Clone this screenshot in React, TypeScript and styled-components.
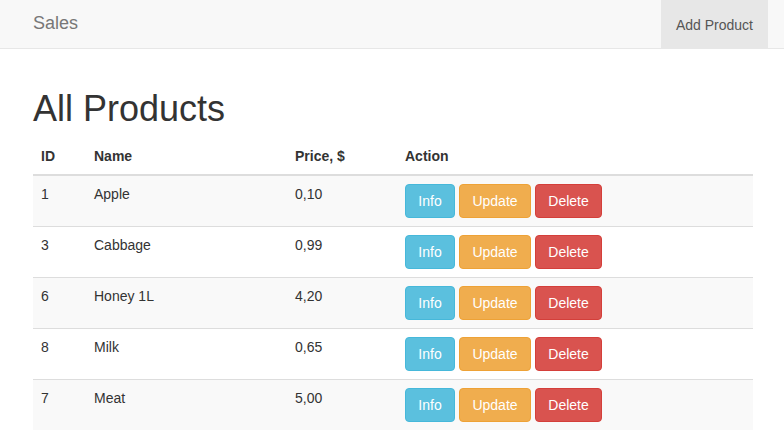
import React from "react";
import styled, { createGlobalStyle } from "styled-components";

const GlobalStyle = createGlobalStyle`
  html, body {
    margin: 0;
    padding: 0;
    overflow: hidden;
    background: #fff;
  }
  body {
    font-family: "Liberation Sans", Arial, Helvetica, sans-serif;
    font-size: 14px;
    line-height: 20px;
    color: #333;
  }
  * { box-sizing: border-box; }
`;

const Navbar = styled.nav`
  height: 49px;
  background: #f8f8f8;
  border-bottom: 1px solid #e7e7e7;
  display: flex;
  justify-content: space-between;
  padding: 0 16px 0 33px;
`;

const Brand = styled.a`
  font-size: 18px;
  line-height: 20px;
  padding-top: 13px;
  color: #777;
  text-decoration: none;
`;

const NavLink = styled.a<{ $active?: boolean }>`
  height: 48px;
  padding: 15px 15px 0;
  line-height: 20px;
  color: #555;
  background: ${(p) => (p.$active ? "#e7e7e7" : "transparent")};
  text-decoration: none;
`;

const Container = styled.main`
  width: 753px;
  padding-left: 33px;
  padding-top: 20px;
`;

const Title = styled.h1`
  font-size: 36px;
  font-weight: 500;
  line-height: 1.1;
  margin: 20px 0 9px;
  color: #333;
`;

const Table = styled.table`
  width: 720px;
  border-collapse: collapse;
  border-spacing: 0;
  table-layout: fixed;
`;

const Th = styled.th`
  text-align: left;
  font-weight: bold;
  padding: 8px;
  line-height: 20px;
  vertical-align: bottom;
  border-bottom: 2px solid #ddd;
`;

const Row = styled.tr`
  &:nth-child(odd) {
    background: #f9f9f9;
  }
`;

const Td = styled.td`
  padding: 8px;
  line-height: 20px;
  vertical-align: top;
  border-top: 1px solid #ddd;
`;

const Actions = styled.div`
  display: flex;
  gap: 4px;
`;

const variants = {
  info: { bg: "#5bc0de", border: "#46b8da", minWidth: 50 },
  warning: { bg: "#f0ad4e", border: "#eea236", minWidth: 72 },
  danger: { bg: "#d9534f", border: "#d43f3a", minWidth: 67 },
};

const Button = styled.button<{ $variant: keyof typeof variants }>`
  font-family: inherit;
  font-size: 14px;
  line-height: 20px;
  padding: 6px 12px;
  min-width: ${(p) => variants[p.$variant].minWidth}px;
  border-radius: 4px;
  border: 1px solid ${(p) => variants[p.$variant].border};
  background: ${(p) => variants[p.$variant].bg};
  color: #fff;
  cursor: pointer;
`;

const products = [
  { id: 1, name: "Apple", price: "0,10" },
  { id: 3, name: "Cabbage", price: "0,99" },
  { id: 6, name: "Honey 1L", price: "4,20" },
  { id: 8, name: "Milk", price: "0,65" },
  { id: 7, name: "Meat", price: "5,00" },
];

export default function App() {
  return (
    <>
      <GlobalStyle />
      <Navbar>
        <Brand href="#">Sales</Brand>
        <NavLink href="#" $active>
          Add Product
        </NavLink>
      </Navbar>
      <Container>
        <Title>All Products</Title>
        <Table>
          <colgroup>
            <col style={{ width: 53 }} />
            <col style={{ width: 201 }} />
            <col style={{ width: 110 }} />
            <col style={{ width: 356 }} />
          </colgroup>
          <thead>
            <tr>
              <Th>ID</Th>
              <Th>Name</Th>
              <Th>Price, $</Th>
              <Th>Action</Th>
            </tr>
          </thead>
          <tbody>
            {products.map((p) => (
              <Row key={p.id}>
                <Td>{p.id}</Td>
                <Td>{p.name}</Td>
                <Td>{p.price}</Td>
                <Td>
                  <Actions>
                    <Button $variant="info">Info</Button>
                    <Button $variant="warning">Update</Button>
                    <Button $variant="danger">Delete</Button>
                  </Actions>
                </Td>
              </Row>
            ))}
          </tbody>
        </Table>
      </Container>
    </>
  );
}
